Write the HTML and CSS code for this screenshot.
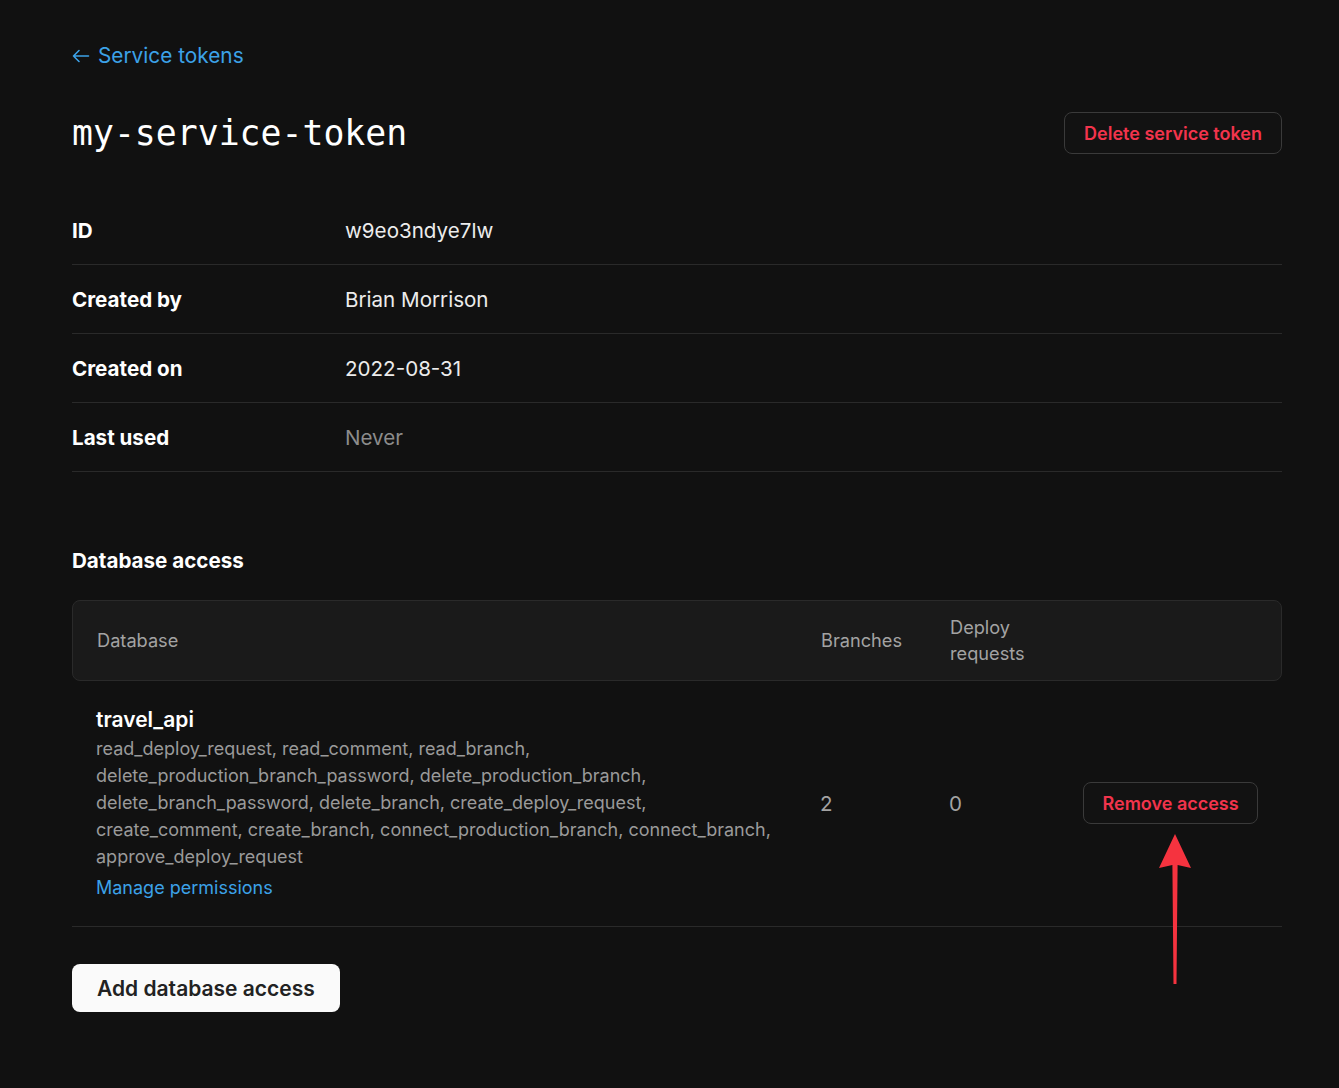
FILE: index.html
```html
<!DOCTYPE html>
<html lang="en">
<head>
<meta charset="utf-8">
<title>my-service-token</title>
<link rel="stylesheet" href="styles.css">
</head>
<body>
<main class="page">
  <a class="back" href="#">
    <svg class="back-icon" width="18" height="18" viewBox="0 0 18 18" fill="none" stroke="currentColor" stroke-width="1.6" stroke-linecap="round" stroke-linejoin="round"><path d="M16.5 9H1.5M7 3.5L1.5 9 7 14.5"/></svg>
    <span>Service tokens</span>
  </a>

  <div class="title-row">
    <h1 class="title">my-service-token</h1>
    <button class="btn btn-danger">Delete service token</button>
  </div>

  <dl class="info">
    <div class="info-row"><dt>ID</dt><dd>w9eo3ndye7lw</dd></div>
    <div class="info-row"><dt>Created by</dt><dd>Brian Morrison</dd></div>
    <div class="info-row"><dt>Created on</dt><dd>2022-08-31</dd></div>
    <div class="info-row"><dt>Last used</dt><dd class="muted">Never</dd></div>
  </dl>

  <h2 class="section-title">Database access</h2>

  <div class="table">
    <div class="thead">
      <div class="cell c-db">Database</div>
      <div class="cell c-br">Branches</div>
      <div class="cell c-dr">Deploy requests</div>
      <div class="cell c-act"></div>
    </div>
    <div class="trow">
      <div class="cell c-db">
        <div class="db-name">travel_api</div>
        <div class="perms">read_deploy_request, read_comment, read_branch, delete_production_branch_password, delete_production_branch, delete_branch_password, delete_branch, create_deploy_request, create_comment, create_branch, connect_production_branch, connect_branch, approve_deploy_request</div>
        <a class="manage" href="#">Manage permissions</a>
      </div>
      <div class="cell c-br num">2</div>
      <div class="cell c-dr num">0</div>
      <div class="cell c-act act"><button class="btn btn-danger btn-sm">Remove access</button></div>
    </div>
  </div>

  <button class="btn btn-primary">Add database access</button>

  <svg class="annot" width="40" height="160" viewBox="0 0 40 160">
    <polygon fill="#f5333f" points="20,0 36,34 22.6,31 21.5,150 18.5,150 17.4,31 4,34"/>
  </svg>
</main>
</body>
</html>
```

FILE: styles.css
```css
* { box-sizing: border-box; }

html, body {
  margin: 0;
  background: #111111;
  color: #f2f2f2;
  font-family: Inter, "Noto Sans", sans-serif;
}

.page {
  position: relative;
  width: 1210px;
  margin-left: 72px;
  padding-top: 40px;
  padding-bottom: 76px;
}

.back {
  display: inline-flex;
  align-items: center;
  gap: 8px;
  height: 30px;
  color: #3ca2e8;
  text-decoration: none;
  font-size: 20.8px;
}

.back-icon { margin-top: 1px; }

.title-row {
  display: flex;
  align-items: center;
  justify-content: space-between;
  margin-top: 42px;
  height: 42px;
}

.title {
  margin: 0;
  font-family: "DejaVu Sans Mono", "Liberation Mono", monospace;
  font-weight: 400;
  font-size: 34.8px;
  line-height: 46px;
  color: #ffffff;
}

.btn {
  font-family: Inter, "Noto Sans", sans-serif;
  cursor: pointer;
  border-radius: 8px;
  white-space: nowrap;
}

.btn-danger {
  background: #121212;
  border: 1px solid #3a3a3a;
  color: #f2344c;
  font-size: 18px;
  font-weight: 600;
  height: 42px;
  padding: 0 19px;
}

.btn-sm { padding: 0 18.5px; }

.btn-primary {
  display: block;
  margin-top: 37px;
  height: 48px;
  padding: 0 25px;
  background: #fafafa;
  border: none;
  color: #222222;
  font-size: 21px;
  font-weight: 600;
}

.info {
  margin: 42px 0 0;
}

.info-row {
  display: flex;
  align-items: center;
  height: 69px;
  border-bottom: 1px solid #2a2a2a;
}

.info-row dt {
  width: 273px;
  font-weight: 700;
  font-size: 20.6px;
  color: #ffffff;
}

.info-row dd {
  margin: 0;
  font-size: 20.6px;
  color: #ececec;
}

.info-row dd.muted { color: #8c8c8c; }

.section-title {
  margin: 75px 0 0;
  font-size: 20.6px;
  font-weight: 700;
  line-height: 28px;
  color: #ffffff;
}

.table { margin-top: 25px; }

.thead, .trow {
  display: grid;
  grid-template-columns: 724px 129px 134px 1fr;
}

.thead {
  align-items: center;
  background: #1a1a1a;
  border: 1px solid #2a2a2a;
  border-radius: 8px;
  color: #a3a3a3;
  font-size: 18.2px;
  line-height: 26px;
}

.thead .cell { padding: 13px 0 14px 24px; }
.thead .c-dr { padding-right: 30px; }

.trow {
  align-items: center;
  border-bottom: 1px solid #2a2a2a;
}

.trow .cell { padding: 24px 0 25px 24px; }

.db-name {
  font-size: 21px;
  font-weight: 600;
  line-height: 30px;
  color: #ffffff;
}

.perms {
  font-size: 18px;
  line-height: 27px;
  color: #9a9a9a;
}

.manage {
  display: inline-block;
  margin-top: 4px;
  font-size: 18px;
  line-height: 27px;
  color: #3ca2e8;
  text-decoration: none;
}

.num {
  font-size: 20.6px;
  color: #a3a3a3;
}

.act {
  display: flex;
  justify-content: flex-end;
}

.trow .act { padding-right: 24px; }

.annot {
  position: absolute;
  left: 1083px;
  top: 834px;
}
```
